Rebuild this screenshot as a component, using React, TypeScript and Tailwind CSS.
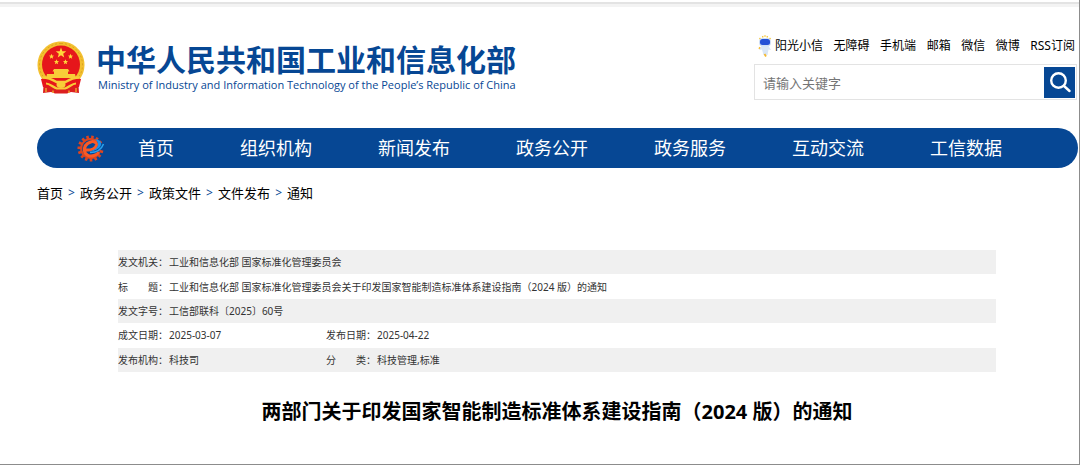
import type { ReactNode } from 'react'

const quickLinks = ['无障碍', '手机端', '邮箱', '微信', '微博', 'RSS订阅']

const navItems = ['首页', '组织机构', '新闻发布', '政务公开', '政务服务', '互动交流', '工信数据']

const crumbs = ['首页', '政务公开', '政策文件', '文件发布', '通知']

// the gear is open at the upper right, where the blue stroke runs out
const teeth = [75, 99, 123, 147, 171, 195, 219, 243, 267, 291, 315, 339, 3, 27]

function Star({ x, y, r }: { x: number; y: number; r: number }) {
  const points = Array.from({ length: 10 }, (_, i) => {
    const radius = i % 2 ? r * 0.42 : r
    const angle = (Math.PI / 5) * i - Math.PI / 2
    return `${x + radius * Math.cos(angle)},${y + radius * Math.sin(angle)}`
  }).join(' ')
  return <polygon points={points} fill="#ffd83a" />
}

function Emblem() {
  return (
    <svg viewBox="0 0 48 54" className="h-[54px] w-12 shrink-0" aria-hidden="true">
      <path d="M7 37 6 52l8-1 4 1.500h12l4-1.500 8 1-1-15z" fill="#dc1f1f" />
      <path d="M24 .5C11 .5 .5 11 .5 24c0 6 2 11 5.500 15h36c3.500-4 5.500-9 5.500-15C47.500 11 37 .5 24 .5z" fill="#f3c02f" />
      <path d="M24 2.500C12 2.500 2.500 12 2.500 24c0 5 1.500 9 4 12" fill="none" stroke="#dda321" strokeWidth="1" strokeDasharray="2 2" />
      <path d="M24 2.500C36 2.500 45.500 12 45.500 24c0 5-1.500 9-4 12" fill="none" stroke="#dda321" strokeWidth="1" strokeDasharray="2 2" />
      <circle cx="24" cy="23.500" r="19" fill="#e6161b" />
      <Star x={24} y={12} r={5.5} />
      <Star x={14.5} y={15.5} r={2.8} />
      <Star x={33.5} y={15.5} r={2.8} />
      <Star x={19.5} y={21} r={2.8} />
      <Star x={28.5} y={21} r={2.8} />
      <path d="M17 28h14l1.500 2.500H31V33h7l1 4H9l1-4h7v-2.500h-1.500z" fill="#f8cd38" />
      <path d="M4 38c6-1 10 0 14 2h12c4-2 8-3 14-2l-2 8H6z" fill="#e6161b" />
      <path d="M5.500 36.500c6 0 10 2 14 4.500h9c4-2.500 8-4.500 14-4.500" fill="none" stroke="#f8cd38" strokeWidth="2.600" />
      <path d="M9 42.500c4 0 7 4 11 5h8c4-1 7-5 11-5" fill="none" stroke="#f8cd38" strokeWidth="2.200" />
      <ellipse cx="24" cy="43.500" rx="4.500" ry="3.500" fill="#f8cd38" />
      <path d="M9 47v4M39 47v4M16 49.500v2.500M32 49.500v2.500" stroke="#f3c02f" strokeWidth="1.200" />
    </svg>
  )
}

function GearLogo() {
  return (
    <svg viewBox="0 0 28 28" className="h-7 w-7" aria-hidden="true">
      <g fill="#dd451f">
        {teeth.map((angle) => (
          <rect key={angle} x="12.300" y="1.500" width="2.600" height="3.600" transform={`rotate(${angle + 30} 13.500 14.500)`} />
        ))}
      </g>
      <path d="M20 7.500A9.500 9.500 0 1 0 22 19" fill="none" stroke="#dd451f" strokeWidth="2" />
      <path d="M9 16c5 .5 10-1.500 10.500-5 .3-3-3-4-6-3C9.500 9.500 7 13 7.500 17c.5 4 5 6 9.500 4.500 2.500-.8 4-2 5-3.500" fill="none" stroke="#fa5a25" strokeWidth="3" />
      <path d="M18 5.500c4-.5 7 2 6 5.500-1 3.500-6 6.500-12 6.500 5-1.200 8.500-3.500 9-6.500.3-2.500-1-4.500-3-5.500z" fill="#1f8fe6" />
      <path d="M26.500 10c-2 5.500-7 8.500-13.500 8.500" fill="none" stroke="#2aa3ee" strokeWidth="1.500" />
    </svg>
  )
}

function Robot() {
  return (
    <svg viewBox="0 0 14 22" className="h-[22px] w-3.5" aria-hidden="true">
      <path d="M1.500 3 2.500 4.200M4.500 1 5 2.500M9.500 1 9 2.500M12.500 3 11.500 4.200M7 .3v1.400" stroke="#f5c842" strokeWidth="1.400" />
      <path d="M4 10h6l3 5-2.500-.5L9.500 20h-4L4 14.500 1 15z" fill="#d9e6f6" />
      <rect x="1" y="3" width="12" height="8.500" rx="4" fill="#cfdff6" />
      <rect x="2" y="4" width="10" height="6" rx="2.500" fill="#2450d6" />
      <path d="M6.500 19 8 21.500M1 12.500l1 1" stroke="#f5b82e" strokeWidth="1.800" />
    </svg>
  )
}

function SearchIcon() {
  return (
    <svg viewBox="0 0 22 22" className="size-[22px]" fill="none" stroke="#fff" strokeWidth="2.400" aria-hidden="true">
      <circle cx="9.500" cy="9.500" r="7.300" />
      <path d="m15 15 5.500 5" strokeLinecap="round" />
    </svg>
  )
}

function Row({ shaded, children }: { shaded?: boolean; children: ReactNode }) {
  return <tr className={shaded ? 'bg-[#f0f0f0]' : ''}>{children}</tr>
}

function Label({ text }: { text: string }) {
  return (
    <th scope="row" className="p-0 text-left font-normal">
      <span className="flex w-[44px] justify-between">
        {text.length > 2 ? (
          <span className="whitespace-nowrap">{text}：</span>
        ) : (
          <>
            <span>{text[0]}</span>
            <span className="-mr-1.5 whitespace-nowrap">{text[1]}：</span>
          </>
        )}
      </span>
    </th>
  )
}

export default function App() {
  return (
    <div className="min-h-screen border-r border-b border-[#8c8c8c] bg-white pt-0.5 font-['Noto_Sans','Noto_Sans_CJK_SC',sans-serif] text-black">
      <div className="h-[5px] border-t-2 border-[#e3e3e3] bg-[#f3f3f3]" />

      <header className="flex items-start justify-between pt-7 pr-0.5 pl-[37px]">
        <a href="#" className="mt-1.5 flex items-center gap-[11px] text-[#064794]">
          <Emblem />
          <span className="flex flex-col whitespace-nowrap">
            <span className="text-[30px] leading-[34px] font-bold">中华人民共和国工业和信息化部</span>
            <span className="pl-0.5 font-['Open_Sans','Noto_Sans',sans-serif] text-[11px] leading-4 font-medium">
              Ministry of Industry and Information Technology of the People’s Republic of China
            </span>
          </span>
        </a>

        <div className="w-[323px]">
          <nav className="flex items-center justify-between pr-0.5 pl-1 text-[12px] leading-5 whitespace-nowrap" aria-label="快捷链接">
            <a href="#" className="flex items-center gap-[3px]">
              <Robot />
              阳光小信
            </a>
            {quickLinks.map((label) => (
              <a key={label} href="#">
                {label}
              </a>
            ))}
          </nav>
          <form className="mt-[7px] flex h-9 items-center border border-[#e3e3e3] pr-px" onSubmit={(e) => e.preventDefault()}>
            <input
              type="text"
              aria-label="搜索"
              placeholder="请输入关键字"
              className="h-full min-w-0 flex-1 px-2 pt-0.5 text-[13px] outline-none placeholder:text-[#757575]"
            />
            <button type="submit" aria-label="搜索" className="flex size-[31px] items-center justify-center bg-[#064794]">
              <SearchIcon />
            </button>
          </form>
        </div>
      </header>

      <nav className="mt-7 mr-px ml-[37px] flex h-10 items-center rounded-full bg-[#064794] pl-10 text-white" aria-label="主导航">
        <GearLogo />
        <ul className="ml-[33px] flex gap-[66px] text-[18px] leading-6 whitespace-nowrap">
          {navItems.map((item) => (
            <li key={item}>
              <a href="#">{item}</a>
            </li>
          ))}
        </ul>
      </nav>

      <nav className="mt-[15px] ml-[37px] text-[13px] leading-5" aria-label="当前位置">
        <ol className="flex">
          {crumbs.map((crumb, i) => (
            <li key={crumb} className="flex">
              {i > 0 && <span className="w-[17px] text-center text-[12px] text-[#064794]">&gt;</span>}
              <a href="#">{crumb}</a>
            </li>
          ))}
        </ol>
      </nav>

      <main className="mr-[83px] ml-[118px] pt-[47px]">
        <table className="h-[122px] w-full table-fixed text-[10px] leading-4 text-[#333]">
          <colgroup>
            <col className="w-[51px]" />
            <col className="w-[157px]" />
            <col className="w-[51px]" />
            <col />
          </colgroup>
          <tbody>
            <Row shaded>
              <Label text="发文机关" />
              <td colSpan={3}>工业和信息化部 国家标准化管理委员会</td>
            </Row>
            <Row>
              <Label text="标题" />
              <td colSpan={3}>工业和信息化部 国家标准化管理委员会关于印发国家智能制造标准体系建设指南（2024 版）的通知</td>
            </Row>
            <Row shaded>
              <Label text="发文字号" />
              <td colSpan={3}>工信部联科〔2025〕60号</td>
            </Row>
            <Row>
              <Label text="成文日期" />
              <td>2025-03-07</td>
              <Label text="发布日期" />
              <td>2025-04-22</td>
            </Row>
            <Row shaded>
              <Label text="发布机构" />
              <td>科技司</td>
              <Label text="分类" />
              <td>科技管理,标准</td>
            </Row>
          </tbody>
        </table>
        <h1 className="mt-[26px] text-center text-[20px] leading-7 font-bold">
          两部门关于印发国家智能制造标准体系建设指南（2024 版）的通知
        </h1>
      </main>
    </div>
  )
}
